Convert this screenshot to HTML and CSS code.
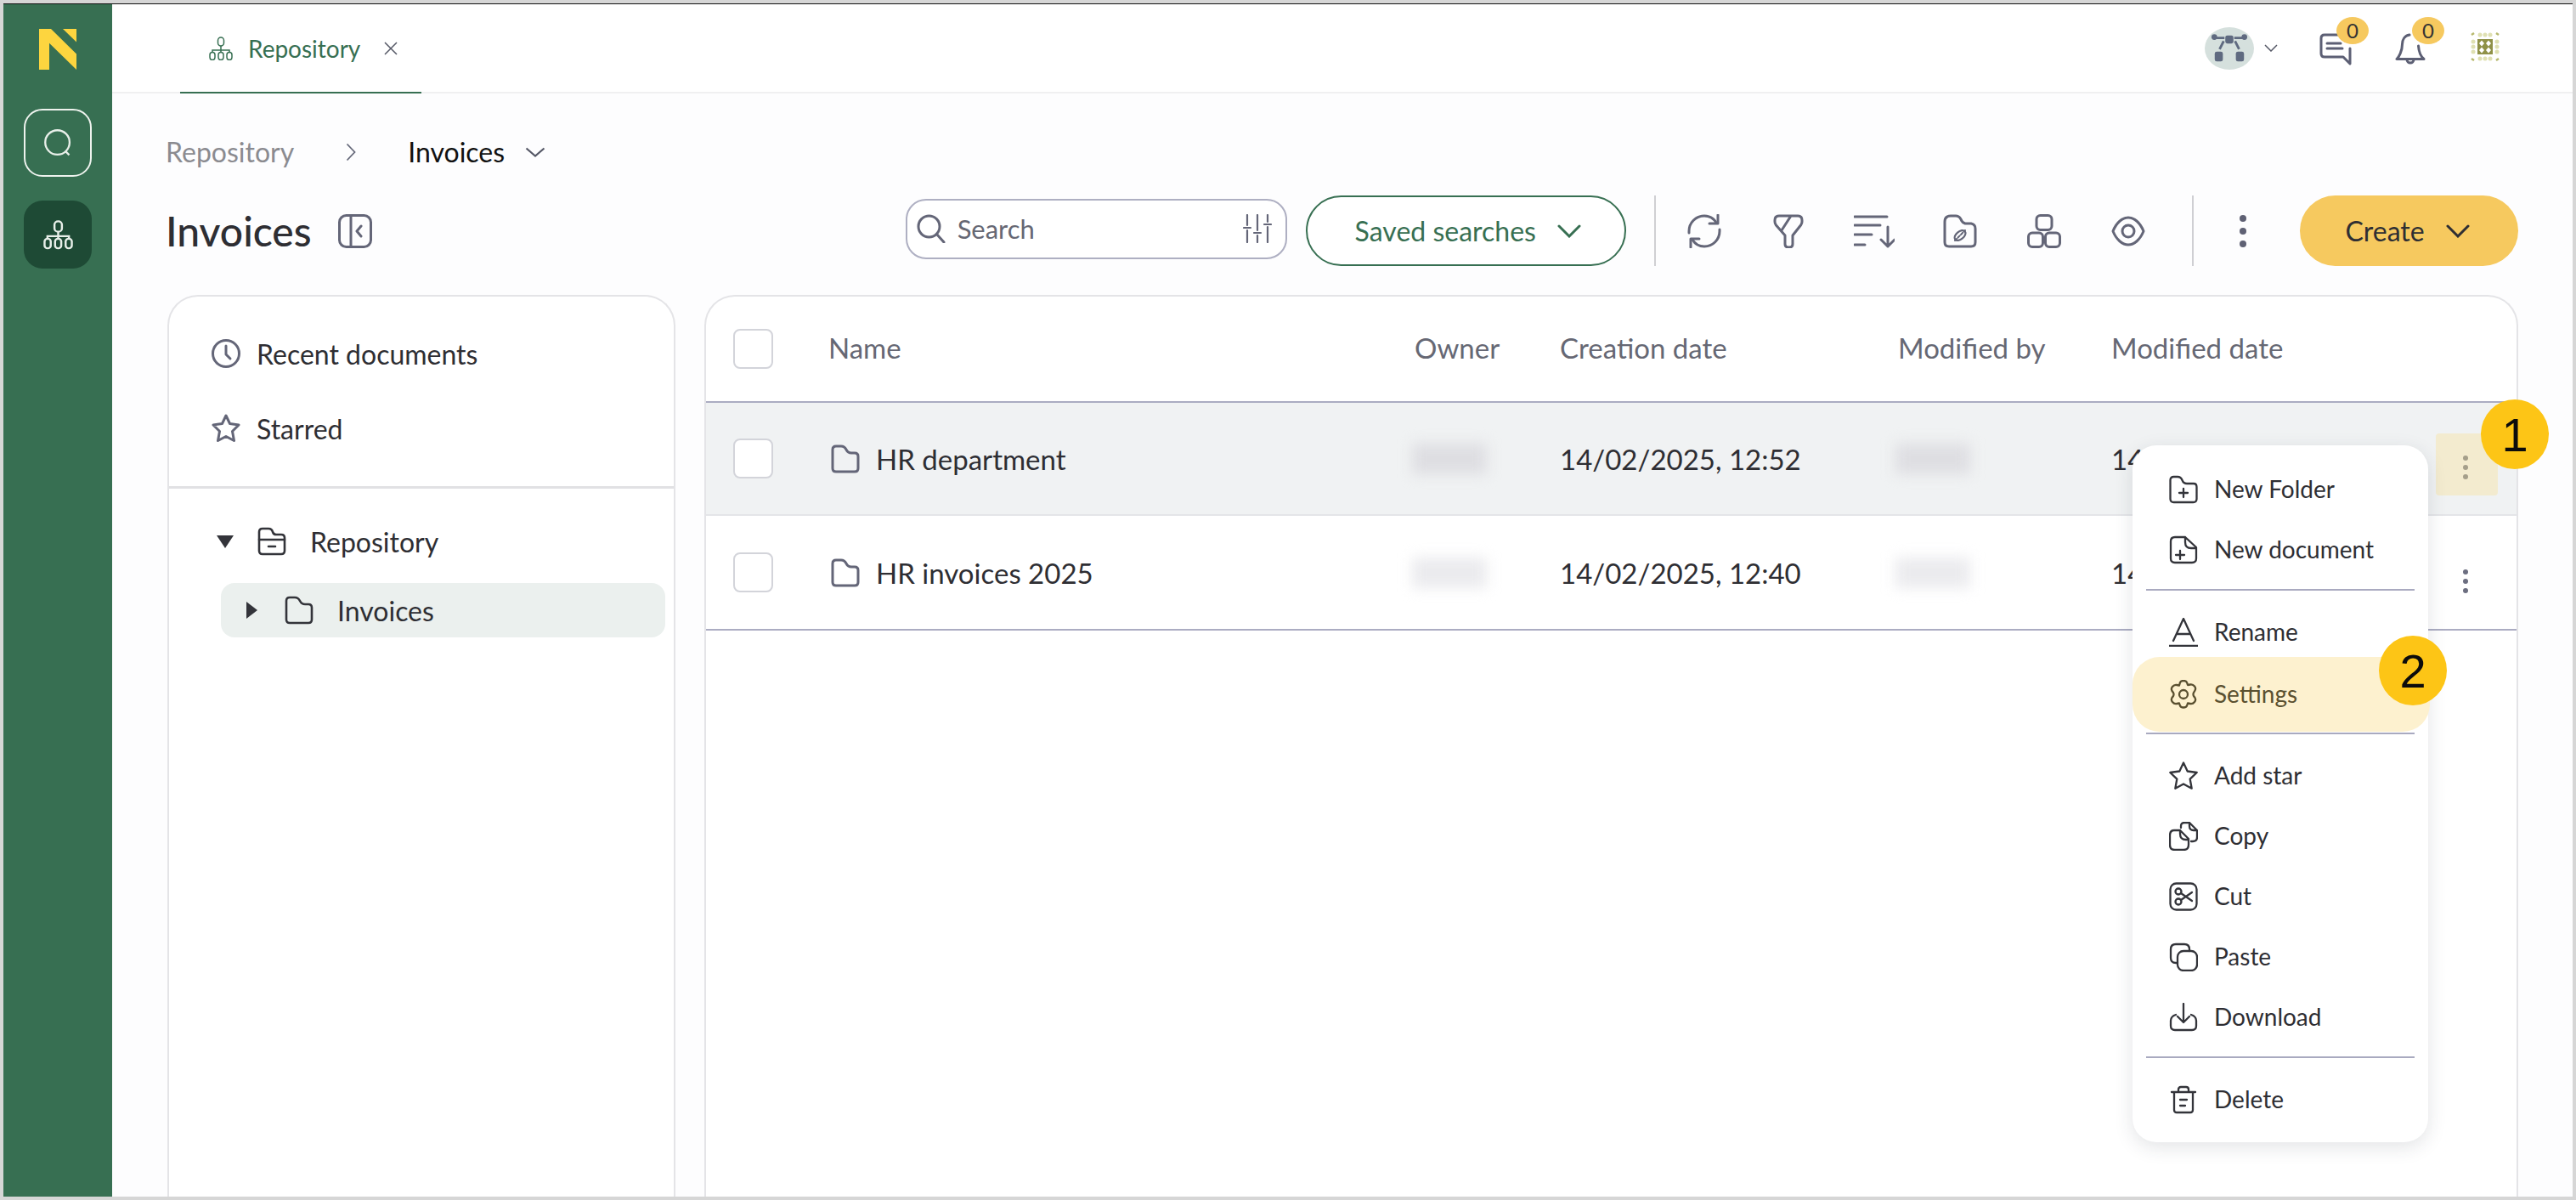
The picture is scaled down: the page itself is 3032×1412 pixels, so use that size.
FILE: index.html
```html
<!DOCTYPE html>
<html lang="en">
<head>
<meta charset="utf-8">
<title>Invoices</title>
<link rel="stylesheet" href="styles.css">
</head>
<body>
<div class="app">
  <nav class="rail">
    <svg class="logo" viewBox="0 0 44 48" width="44" height="48"><path d="M0 0h14l30 29.500v18.500L12 16.700V48H0z"/><path d="M28 0h16v15.500z"/></svg>
    <button class="rail-btn rail-outline"><svg viewBox="0 0 40 40" width="37" height="37"><circle cx="19" cy="19" r="15.500"/><path d="M29 30l5 5"/></svg></button>
    <button class="rail-btn rail-active"><svg viewBox="0 0 36 40" width="35" height="35" preserveAspectRatio="none"><rect x="13.500" y="1.500" width="9" height="14" rx="4.500"/><path d="M18 15.500v6M5 26v-4.500h26V26M18 21.500V26"/><rect x="1.500" y="25" width="7.500" height="13" rx="3.700"/><rect x="14.200" y="25" width="7.500" height="13" rx="3.700"/><rect x="27" y="25" width="7.500" height="13" rx="3.700"/></svg></button>
  </nav>

  <main class="main">
    <header class="topbar">
      <div class="tab">
        <svg class="tab-ico" viewBox="0 0 28 28" width="28" height="28"><rect x="10.500" y="1" width="7" height="10" rx="3.500"/><path d="M14 11v5M4 19v-3h20v3M14 16v3"/><rect x="1" y="18.500" width="6" height="9" rx="3"/><rect x="11" y="18.500" width="6" height="9" rx="3"/><rect x="21" y="18.500" width="6" height="9" rx="3"/></svg>
        <span class="tab-label">Repository</span>
        <svg class="tab-x" viewBox="0 0 16 16" width="16" height="16"><path d="M1 1l14 14M15 1L1 15"/></svg>
      </div>
      <div class="top-actions">
        <span class="avatar"><svg viewBox="0 0 46 36" width="46" height="36"><rect x="18" y="2" width="10" height="10" rx="2.500" class="f"/><circle cx="4.500" cy="4" r="3.500" class="f"/><circle cx="41.500" cy="4" r="3.500" class="f"/><rect x="5" y="22" width="10" height="12" rx="2.500" class="f"/><rect x="31" y="22" width="10" height="12" rx="2.500" class="f"/><path d="M7 5h10M29 5h10M16 9l-5 10M30 9l5 10"/></svg></span>
        <svg class="top-chev" viewBox="0 0 16 9" width="16" height="9"><path d="M1 1l7 7 7-7"/></svg>
        <span class="notif notif-chat">
          <svg viewBox="0 0 38 38" width="38" height="38"><path d="M24 2H6Q2 2 2 6v18q0 4 4 4h22l8 8V18"/><path d="M9 12h16M9 18h18"/></svg>
          <b class="count">0</b>
        </span>
        <span class="notif notif-bell">
          <svg viewBox="0 0 36 38" width="36" height="38"><path d="M17 2C11 3 8.500 8 8.500 13c0 8-4 15-6.500 17.500h32C31 28 28 22 27.500 15"/><path d="M14 31a4 4 0 0 0 8 0"/></svg>
          <b class="count">0</b>
        </span>
        <svg class="chip" viewBox="0 0 34 34" width="34" height="34"><rect x="8" y="8" width="18" height="18" fill="#8f9147"/><path d="M13 9.500l3 3.500-3 3.500-3-3.500zM21 9.500l3 3.500-3 3.500-3-3.500zM13 17.500l3 3.500-3 3.500-3-3.500zM21 17.500l3 3.500-3 3.500-3-3.500z" fill="#fff"/><g fill="#dfe0b2"><circle cx="11" cy="3" r="2.500"/><circle cx="17" cy="3" r="2.500"/><circle cx="23" cy="3" r="2.500"/><circle cx="3" cy="11" r="2.500"/><circle cx="3" cy="17" r="2.500"/><circle cx="3" cy="23" r="2.500"/><circle cx="31" cy="11" r="2.500"/><circle cx="31" cy="17" r="2.500"/><circle cx="31" cy="23" r="2.500"/><circle cx="11" cy="31" r="2.500"/><circle cx="17" cy="31" r="2.500"/><circle cx="23" cy="31" r="2.500"/></g><path d="M1 3l3-2M33 3l-3-2M1 31l3 2M33 31l-3 2" stroke="#b7b96e" stroke-width="2.500" fill="none"/></svg>
      </div>
    </header>

    <div class="page">
      <div class="crumbs">
        <span class="crumb-root">Repository</span>
        <svg class="crumb-sep" viewBox="0 0 12 22" width="12" height="22"><path d="M1.500 1.500L10.500 11 1.500 20.500"/></svg>
        <span class="crumb-now">Invoices</span>
        <svg class="crumb-chev" viewBox="0 0 24 12" width="24" height="12"><path d="M1.500 1.500L12 10.500 22.500 1.500"/></svg>
      </div>

      <div class="toolbar">
        <h1 class="title">Invoices</h1>
        <svg class="ico panel-toggle" viewBox="0 0 40 40" width="40" height="40"><rect x="1.500" y="1.500" width="37" height="37" rx="8"/><path d="M15 1.500v37M27 14l-5 6 5 6"/></svg>
        <div class="search">
          <svg class="ico" viewBox="0 0 34 34" width="34" height="34"><circle cx="14.500" cy="14.500" r="12.500"/><path d="M23.500 23.500L32 33"/></svg>
          <span class="search-label">Search</span>
          <svg class="ico search-tune" viewBox="0 0 34 34" width="34" height="34"><path d="M5 1v12M5 19v14M17 1v18M17 25v8M29 1v8M29 15v18M1 16h8M13 22h8M25 12h8"/></svg>
        </div>
        <button class="saved">Saved searches<svg viewBox="0 0 28 16" width="28" height="16"><path d="M2 2l12 12L26 2"/></svg></button>
        <span class="vsep sep-a"></span>
        <div class="tools">
          <svg class="ico" viewBox="0 0 40 40" width="40" height="40"><path d="M2 22V20C2 10 10 2 20 2c6 0 11 3 14 8M38 18v2c0 10-8 18-18 18-6 0-11-3-14-8"/><path d="M36 1v10H26M4 39V29h10"/></svg>
          <svg class="ico t-filter" viewBox="0 0 36 40" width="36" height="40"><path d="M7 2h22q5 0 5 5v2q0 2-1.500 4L23 25v10q0 4-4 4h-1q-4 0-4-4V25L3.500 13Q2 11 2 9V7q0-5 5-5zM21 2l-11 17"/></svg>
          <svg class="ico t-sort" viewBox="0 0 48 40" width="48" height="40"><path d="M1 3h38M1 13h30M1 24h20M1 36h12M40 15v23M32 30l8 8 8-8"/></svg>
          <svg class="ico" viewBox="0 0 40 40" width="40" height="40"><path d="M2 9q0-7 7-7h6q4 0 6 4l1 2q1 2 4 3h7q5 1 5 6v16q0 5-5 5H7q-5 0-5-5z"/><ellipse cx="20" cy="25" rx="7.500" ry="4.500" transform="rotate(-40 20 25)" stroke-width="2.200"/><path d="M14 31l12-12" stroke-width="2" stroke-dasharray="3 2"/></svg>
          <svg class="ico" viewBox="0 0 40 40" width="40" height="40"><rect x="11" y="1.500" width="18" height="17" rx="4.500"/><rect x="1.500" y="22" width="17" height="16.500" rx="4.500"/><rect x="21.500" y="22" width="17" height="16.500" rx="4.500"/></svg>
          <svg class="ico" viewBox="0 0 40 36" width="40" height="36"><path d="M2 18C6 8 13 2 20 2s14 6 18 16c-4 10-11 16-18 16S6 28 2 18z"/><circle cx="20" cy="18" r="7"/></svg>
        </div>
        <span class="vsep sep-b"></span>
        <span class="more"><i></i><i></i><i></i></span>
        <button class="create">Create<svg viewBox="0 0 28 16" width="28" height="16"><path d="M2 2l12 12L26 2"/></svg></button>
      </div>

      <div class="panels">
        <aside class="tree">
          <div class="quick">
            <div class="quick-row">
              <svg class="ico" viewBox="0 0 34 34" width="34" height="34"><circle cx="17" cy="17" r="15.500"/><path d="M17 8v10l5 5"/></svg>Recent documents
            </div>
            <div class="quick-row">
              <svg class="ico" viewBox="0 0 34 34" width="34" height="34"><path d="M17 2l4.500 9.500 10.500 1.500-7.500 7.500 2 11-9.500-5-9.500 5 2-11L2 13l10.500-1.500z" stroke-linejoin="round"/></svg>Starred
            </div>
          </div>
          <div class="tree-body">
            <div class="node">
              <span class="tri-down"></span>
              <svg class="dark" viewBox="0 0 34 34" width="34" height="34"><path d="M2 15V6q0-4 4-4h7q4 0 5 4 1 3 4 3h6q4 0 4 4v15q0 4-4 4H6q-4 0-4-4z"/><path d="M2 15h30M13 23h8"/></svg>
              <span>Repository</span>
            </div>
            <div class="node node-sel">
              <span class="tri-right"></span>
              <svg class="dark" viewBox="0 0 34 34" width="34" height="34"><path d="M2 6q0-4 4-4h6q4 0 6 4t6 4h4q4 0 4 4v14q0 4-4 4H6q-4 0-4-4z"/></svg>
              <span>Invoices</span>
            </div>
          </div>
        </aside>

        <section class="table">
          <div class="row row-head">
            <span class="check"></span>
            <span class="th">Name</span>
            <span class="th">Owner</span>
            <span class="th">Creation date</span>
            <span class="th">Modified by</span>
            <span class="th">Modified date</span>
          </div>
          <div class="row row-hover">
            <span class="check"></span>
            <span class="name"><svg class="ico" viewBox="0 0 34 34" width="34" height="34"><path d="M2 6q0-4 4-4h6q4 0 6 4t6 4h4q4 0 4 4v14q0 4-4 4H6q-4 0-4-4z"/></svg>HR department</span>
            <span class="blur"></span>
            <span>14/02/2025, 12:52</span>
            <span class="blur"></span>
            <span>14/02/2025, 12:52</span>
            <span class="kebab kebab-on"><i></i><i></i><i></i></span>
          </div>
          <div class="row row-last">
            <span class="check"></span>
            <span class="name"><svg class="ico" viewBox="0 0 34 34" width="34" height="34"><path d="M2 6q0-4 4-4h6q4 0 6 4t6 4h4q4 0 4 4v14q0 4-4 4H6q-4 0-4-4z"/></svg>HR invoices 2025</span>
            <span class="blur blur-soft"></span>
            <span>14/02/2025, 12:40</span>
            <span class="blur blur-soft"></span>
            <span>14/02/2025, 12:40</span>
            <span class="kebab"><i></i><i></i><i></i></span>
          </div>
        </section>
      </div>
    </div>
  </main>

  <div class="menu">
    <div class="mi"><svg viewBox="0 0 34 34" width="34" height="34"><path d="M1.500 6q0-4 4-4h4.500q4 0 5.500 4t5.500 4h8q3.500 0 3.500 4v14q0 4-4 4H5.500q-4 0-4-4zM17 16v10M12 21h10"/></svg>New Folder</div>
    <div class="mi"><svg viewBox="0 0 34 34" width="34" height="34"><path d="M19 2H7q-5 0-5 5v20q0 5 5 5h20q5 0 5-5V14zM19 2v6q0 7 7 7h6M13 18v10M8 23h10"/></svg>New document</div>
    <hr class="mdiv">
    <div class="mi"><svg viewBox="0 0 34 34" width="34" height="34"><path d="M5 27L17 1l12 26M9 19h16M0 33h34"/></svg>Rename</div>
    <div class="mi mi-on"><svg viewBox="0 0 34 34" width="34" height="34"><path d="M13 3q1-2 4-2t4 2l1 3 3-.500q3-.500 5 2t.500 5L29 15q-1 2 0 4l1.500 2q1.500 2.500-.5 5t-5 2l-3-.500-1 3q-1 2-4 2t-4-2l-1-3-3 .500q-3 .500-5-2t-.500-5L5 19q1-2 0-4l-1.500-2Q2 10.500 4 8t5-2l3 .500z"/><circle cx="17" cy="17" r="5"/></svg>Settings</div>
    <hr class="mdiv mdiv-tight">
    <div class="mi"><svg viewBox="0 0 34 34" width="34" height="34"><path d="M17 1.500l4.700 10 11 1.500-8 7.700 2 11-9.700-5.300-9.700 5.300 2-11-8-7.700 11-1.500z" stroke-linejoin="round"/></svg>Add star</div>
    <div class="mi"><svg viewBox="0 0 34 34" width="34" height="34"><path d="M14 7V5q0-4 4-4h6l9 9v8q0 5-5 5h-2M6 10h7l10 10v7q0 6-6 6H7q-6 0-6-6V16q0-6 5-6zM13 10v4q0 7 7 7h3M24 1v4q0 5 5 5h4"/></svg>Copy</div>
    <div class="mi"><svg viewBox="0 0 34 34" width="34" height="34"><rect x="1.500" y="1.500" width="31" height="31" rx="7"/><circle cx="11" cy="11" r="3.500"/><circle cx="11" cy="23" r="3.500"/><path d="M14 13l13 9M14 21l13-9"/></svg>Cut</div>
    <div class="mi"><svg viewBox="0 0 34 34" width="34" height="34"><path d="M10 24H8q-6 0-6-6V8q0-6 6-6h10q6 0 6 6v2"/><rect x="10" y="10" width="23" height="23" rx="7"/></svg>Paste</div>
    <div class="mi"><svg viewBox="0 0 34 34" width="34" height="34"><path d="M8 14q-6 2-6 7v6q0 5 5 5h20q5 0 5-5v-6q0-5-6-7M17 1v22M10 16l7 7 7-7"/></svg>Download</div>
    <hr class="mdiv">
    <div class="mi"><svg viewBox="0 0 34 34" width="34" height="34"><path d="M3 8h28M11 7V5q0-3 3-3h6q3 0 3 3v2M6 8v21q0 3 3 3h16q3 0 3-3V8M13 17h8M13 24h6"/></svg>Delete</div>
  </div>

  <span class="step step-1">1</span>
  <span class="step step-2">2</span>
</div>
</body>
</html>
```

FILE: styles.css
```css
* { box-sizing: border-box; }
html, body { margin: 0; height: 100%; overflow: hidden; }
body { background: #d6d6d6; font-family: "Lato", "Carlito", sans-serif; color: #2e2e33; }
button { font: inherit; border: 0; padding: 0; cursor: pointer; }
svg { display: block; flex: none; }

.app { position: relative; display: flex; width: 3032px; height: 1412px; padding: 4px; }

.rail { width: 128px; flex: none; background: #376f52; display: flex; flex-direction: column; align-items: center; padding-top: 29px; border-top: 1px solid #111; }
.logo { fill: #fdd53f; margin-bottom: 46px; }
.rail-btn { width: 80px; height: 80px; border-radius: 22px; display: flex; align-items: center; justify-content: center; background: transparent; }
.rail-btn svg { fill: none; stroke: #e8efe9; stroke-width: 2.500; }
.rail-outline { border: 2px solid #eef3ee; margin-bottom: 28px; }
.rail-active { background: #1e4a35; }

.main { flex: 1; min-width: 0; display: flex; flex-direction: column; background: #fdfdfe; border-top: 1px solid #111; }

.topbar { height: 105px; flex: none; background: #fff; border-bottom: 2px solid #f0f0f1; display: flex; justify-content: space-between; align-items: stretch; }
.tab { margin-left: 80px; width: 284px; display: flex; align-items: center; gap: 18px; padding-left: 34px; height: 105px; border-bottom: 2px solid #376f52; }
.tab-ico { fill: none; stroke: #376f52; stroke-width: 1.500; }
.tab-label { font-size: 28px; color: #376f52; margin-right: 10px; }
.tab-x { fill: none; stroke: #555866; stroke-width: 1.500; }

.top-actions { display: flex; align-items: center; padding-right: 86px; }
.avatar { width: 58px; height: 50px; border-radius: 50%; background: #d5e0dd; display: flex; align-items: center; justify-content: center; }
.avatar svg { fill: none; stroke: #5f6a80; stroke-width: 3; width: 44px; }
.avatar .f { fill: #5f6a80; stroke: none; }
.top-chev { fill: none; stroke: #555866; stroke-width: 1.500; margin-left: 12px; margin-right: 49px; }
.notif { position: relative; display: block; }
.notif svg { fill: none; stroke: #5c5f74; stroke-width: 3; stroke-linecap: round; stroke-linejoin: round; }
.notif-chat { margin-right: 51px; top: 1px; }
.notif-bell { margin-right: 53px; top: 1px; }
.count { position: absolute; left: 20px; top: -19px; width: 38px; height: 32px; border-radius: 50%; background: #f6c95f; font-weight: 400; font-size: 24px; line-height: 32px; text-align: center; color: #333; }
.chip { margin-top: -3px; }

.page { flex: 1; min-height: 0; padding: 0 64px 0 63px; display: flex; flex-direction: column; }

.crumbs { height: 120px; flex: none; display: flex; align-items: center; font-size: 32px; padding-top: 17px; }
.crumb-root { color: #8b8b90; }
.crumb-sep { fill: none; stroke: #66697a; stroke-width: 1.800; margin: 0 61px; }
.crumb-now { color: #111; }
.crumb-chev { fill: none; stroke: #555866; stroke-width: 2.200; margin-left: 24px; }

.toolbar { height: 83px; flex: none; display: flex; align-items: center; }
.title { margin: 0; font-size: 48px; font-weight: 500; color: #2e2e33; line-height: 1; }
.ico { fill: none; stroke: #646678; stroke-width: 3; stroke-linecap: round; stroke-linejoin: round; }
.panel-toggle { margin-left: 31px; margin-right: 628px; }
.search { width: 450px; height: 71px; margin-top: -5px; border: 2px solid #aeafc2; border-radius: 24px; background: #fff; display: flex; align-items: center; padding: 0 16px 0 11px; }
.search-label { font-size: 31px; color: #666874; margin-left: 14px; flex: 1; }
.search-tune { stroke-width: 2.200; }
.saved { width: 377px; height: 83px; margin-left: 22px; padding-left: 4px; border: 2px solid #376f52; border-radius: 42px; background: #fff; color: #376f52; font-size: 32px; display: flex; align-items: center; justify-content: center; gap: 25px; }
.saved svg { fill: none; stroke: #376f52; stroke-width: 3; stroke-linecap: round; }
.vsep { width: 2px; height: 83px; background: #cfcfd3; flex: none; }
.sep-a { margin-left: 33px; margin-right: 37px; }
.tools { display: flex; align-items: center; gap: 59px; }
.t-filter { margin-left: 2px; }
.t-sort { margin-right: -2px; }
.sep-b { margin-left: 55px; margin-right: 54px; }
.more { display: flex; flex-direction: column; gap: 7px; }
.more i { display: block; width: 8px; height: 8px; border-radius: 50%; background: #5f6174; }
.create { width: 257px; height: 83px; margin-left: 63px; border-radius: 42px; background: #f6c95f; color: #2e2e33; font-size: 32px; display: flex; align-items: center; justify-content: center; gap: 25px; padding-right: 4px; }
.create svg { fill: none; stroke: #2e2e33; stroke-width: 3; stroke-linecap: round; }

.panels { flex: 1; min-height: 0; display: grid; grid-template-columns: 598px 1fr; gap: 34px; margin: 34px 0 0 2px; }

.tree, .table { background: #fff; border: 2px solid #e4e4e7; border-bottom: 0; border-radius: 36px 36px 0 0; overflow: hidden; }
.quick { height: 226px; border-bottom: 3px solid #e1e1e4; padding: 23px 0 0 50px; }
.quick-row { display: flex; align-items: center; gap: 19px; height: 88px; font-size: 32px; }
.tree-body { padding-top: 30px; }
.node { display: flex; align-items: center; height: 64px; font-size: 32px; }
.node .dark { fill: none; stroke: #33343a; stroke-width: 2.600; stroke-linecap: round; stroke-linejoin: round; }
.node:first-child { padding-left: 56px; margin-bottom: 17px; }
.node:first-child .dark { margin: 0 28px 0 28px; }
.tri-down { width: 0; height: 0; border-left: 10px solid transparent; border-right: 10px solid transparent; border-top: 15px solid #33343a; }
.node-sel { margin: 0 10px 0 61px; background: #ebf0ee; border-radius: 16px; padding-left: 30px; }
.tri-right { width: 0; height: 0; border-top: 10px solid transparent; border-bottom: 10px solid transparent; border-left: 13px solid #33343a; }
.node-sel .dark { margin: 0 28px 0 32px; }

.row { display: grid; grid-template-columns: 112px 690px 171px 398px 251px 382px 73px; align-items: center; padding-left: 32px; font-size: 33px; height: 133px; }
.row-head { height: 125px; color: #666874; border-bottom: 2px solid #abacc2; }
.th { margin-top: -4px; }
.row-hover { background: #f0f2f3; border-bottom: 2px solid #e4e5e8; }
.row-last { height: 135px; border-bottom: 2px solid #abacc2; }
.check { width: 47px; height: 47px; border: 2px solid #d3d4da; border-radius: 8px; background: #fff; }
.name { display: flex; align-items: center; gap: 19px; padding-left: 3px; }
.blur { display: block; width: 88px; height: 36px; margin-left: -3px; background: #dedee2; filter: blur(8px); }
.blur-soft { background: #ebebee; }
.kebab { width: 73px; height: 73px; margin-top: 14px; padding: 6px 3px 0 0; display: flex; flex-direction: column; align-items: center; justify-content: center; gap: 5px; border-radius: 4px; }
.kebab i { display: block; width: 6px; height: 6px; border-radius: 50%; background: #6c6e80; }
.kebab-on { background: #f3ebcf; }
.kebab-on i { background: #a59f8b; }

.menu { position: absolute; left: 2510px; top: 524px; width: 348px; background: #fff; border-radius: 28px; padding: 16px 0 15px; box-shadow: 0 6px 22px rgba(40, 44, 60, .13); }
.mi { display: flex; align-items: center; gap: 19px; height: 71px; padding: 0 0 2px 43px; font-size: 28px; color: #2e2e33; }
.mi svg { fill: none; stroke: #33343a; stroke-width: 2.300; stroke-linecap: round; stroke-linejoin: round; margin-top: 2px; }
.mi-on { height: 88px; margin: -6px 2px 0 0; background: #fdf1cf; border-radius: 32px; color: #5a5030; width: 350px; }
.mi-on svg { stroke: #5a5030; }
.mdiv { height: 2px; border: 0; margin: 11px 16px 13px; background: #a9aac0; }
.mdiv-tight { margin-top: 1px; }

.step { position: absolute; display: flex; align-items: center; justify-content: center; width: 80px; height: 82px; border-radius: 50%; background: #fdc516; color: #0c0c0c; font-family: "Liberation Sans", Arial, sans-serif; font-size: 56px; }
.step-1 { left: 2920px; top: 470px; }
.step-2 { left: 2800px; top: 748px; }
```
